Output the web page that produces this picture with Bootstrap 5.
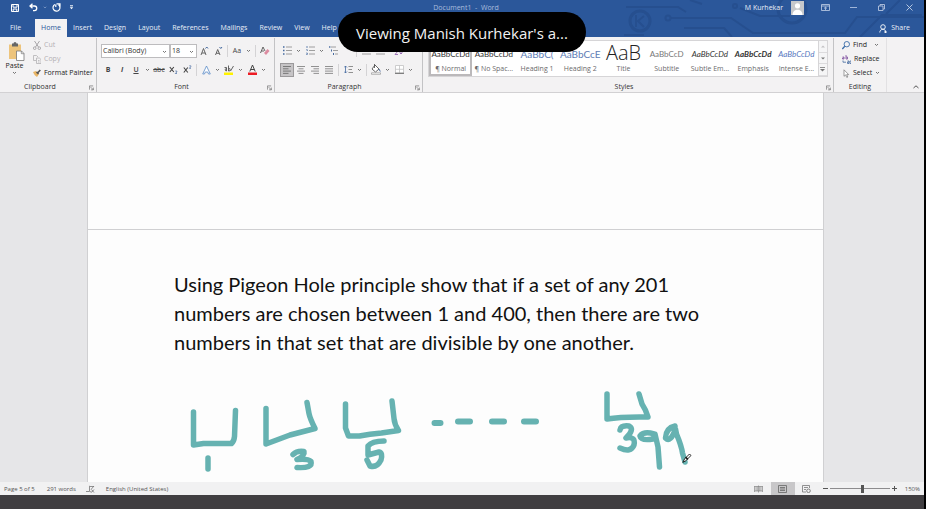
<!DOCTYPE html>
<html lang="en">
<head>
<meta charset="utf-8">
<meta name="viewport" content="width=device-width, initial-scale=1">
<title>Document1 - Word</title>
<link href="https://cdn.jsdelivr.net/npm/bootstrap@5.3.0/dist/css/bootstrap.min.css" rel="stylesheet">
<style>
:root{--blue:#2b579a;--ribbon:#f3f2f3;--line:#d2d1d3;--ink:#444446;--teal:#66b2b1}
body{font:7px/10px "Open Sans","Noto Sans",sans-serif;color:var(--ink);background:#000}
svg{display:block;flex:none}
button,select{font:inherit;color:inherit}
button{background:none;border:0;padding:0}
.app{min-height:100vh;margin-right:2px;background:#e6e6e8}
.head{background:var(--blue);color:#e9eef7}
.circuit{top:0;right:0}
.titlebar{height:19px;padding-bottom:4px}
.side{flex:1 1 0}
.win{margin-left:14px}
.doc-name{color:#a9bcdc}
.tabs a{height:18px;padding:0 6px;color:#e9eef7;text-decoration:none}
.tabs a:first-child{padding:0 14px 0 10px;min-width:35px}
.tabs a.active{background:var(--ribbon);color:var(--blue);width:32px}
.share{padding-right:14px}
.ribbon{height:56px;background:var(--ribbon);border-bottom:1px solid var(--line)}
.group{border-right:1px solid #c3c3c5;margin-top:1px}
.group-name{height:10px;color:#333}
.launch{right:2px;bottom:1px}
.g-clip{width:97px}.g-font{width:178px}.g-para{width:148px}.g-edit{width:53px;border-color:#e2e1e3}.g-end{width:37px}
.dim{color:#b3b1b4}
.dark{color:#222}
.stack button{height:14px;gap:3px}
.tools{padding:5px 0 0 4px}
.g-para .tools{padding-left:5px}
.tools .tool-row{height:15px;margin-bottom:4px}
.t{width:14px;height:14px;display:flex;align-items:center;justify-content:center;flex:none}
.c{width:9px;height:14px;display:flex;align-items:center;justify-content:center;flex:none}
.t.on{background:#c6c4c6;outline:1px solid #9b999b;outline-offset:-1px}
.rule{width:1px;height:12px;background:#d4d3d5;margin:0 2px}
.combo select{appearance:none;background:#fff;border:1px solid #bdbcbe;border-radius:0;height:14px;padding:0 2px 0 1px;width:100%;color:#333;line-height:11px}
.combo svg{right:3px;top:6px;pointer-events:none}
.fontname{width:69px}.fontsize{width:27px}
.gallery{margin:2px 5px 0;background:#fff;border:1px solid #d6d5d7;height:37px}
.style-item{flex:1 1 0;min-width:0;color:#6b6a6c;white-space:nowrap;padding-bottom:2px}
.style-item.on{outline:2px solid #bbb9bb;outline-offset:-2px}
.sample{font:8px/24px Lato,sans-serif;height:22px;color:#333}
.sample.s-head{font-size:10px;color:#5d7cb5}
.sample.s-title{font:20px/22px "Open Sans",sans-serif;font-weight:300;color:#222}
.sample.s-blue{color:#5778c0}.sample.s-gray{color:#777}
.scroller{width:9px;border-left:1px solid #d6d5d7;background:#f5f5f6}
.scroller button{flex:1 1 0;border-bottom:1px solid #dcdbdd}
.canvas{padding:0 100px 0 87px}
.sheet{background:#fdfdfd;border:1px solid #d0d0d2;border-top:0}
.sheet-prev{height:137px}
.sheet-next{border-bottom:0}
.question{font:20px/29px Lato,sans-serif;color:#111;padding:40px 86px 0;margin:0 0 1px}
.status{height:13px;background:#f1f1f2;color:#555;font-size:6px}
.status .view{width:24px;height:13px;display:flex;align-items:center;justify-content:center}
.status .view.on{background:#c8c7c9}
.zoomer{appearance:none;width:60px;height:9px;background:linear-gradient(#8d8c8e,#8d8c8e) center/100% 1px no-repeat;margin:0 2px}
.zoomer::-webkit-slider-thumb{appearance:none;width:3px;height:8px;background:#555;border:0}
.foot{height:14px;background:#403e41}
.pill{left:338px;top:12px;height:40px;border-radius:20px;background:#000;color:#f2f2f2;padding:0 18px;font-size:15px;line-height:42px;width:248px}
</style>
<script src="https://cdn.jsdelivr.net/npm/bootstrap@5.3.0/dist/js/bootstrap.bundle.min.js"></script>
</head>
<body>
<svg width="0" height="0" class="position-absolute" aria-hidden="true">
  <symbol id="car" viewBox="0 0 5 4"><path d="M1 1l1.500 1.500L4 1" fill="none" stroke="#666" stroke-width=".9"/></symbol>
  <symbol id="lau" viewBox="0 0 6 6"><path d="M.5 5V.5H5M2 2l3 3M5.200 2.500v2.700H2.500" fill="none" stroke="#666" stroke-width=".8"/></symbol>
</svg>
<div class="app d-flex flex-column position-relative">
  <header class="head position-relative">
    <svg class="circuit position-absolute" width="300" height="37" viewBox="624 0 300 37" fill="none" stroke="#264f8f" stroke-width="2" aria-hidden="true">
      <circle cx="640" cy="21" r="10" stroke-width="3"/><path d="M636 15v12M644 16l-6 5 6 6M626 7h52l8 5M624 35h20M671 18h60l22 15h92l12-16h67M684 28h40l8 9M740 8l20 8h30M860 37l22-22h40M900 0l-14 14M690 0l12 4"/>
      <circle cx="668" cy="18" r="2.500"/><circle cx="792" cy="9" r="14" stroke-width="3"/><circle cx="735" cy="6" r="2"/><circle cx="882" cy="6" r="2.500"/>
    </svg>
    <div class="titlebar d-flex align-items-center position-relative">
      <div class="side d-flex align-items-center ps-2">
        <button class="t" aria-label="Save"><svg width="8" height="8" viewBox="0 0 8 8"><path d="M.5.5h7v7h-7zM2 .5v2.700h4V.5M2.200 7.500V5h3.600v2.500" fill="none" stroke="#fff"/></svg></button>
        <button class="t ms-1" aria-label="Undo"><svg width="9" height="9" viewBox="0 0 9 9"><path d="M3.500.7L1 3l2.500 2.300M1 3h4.500c3 0 3 4.500 0 4.700H4" fill="none" stroke="#fff" stroke-width="1.300"/></svg></button>
        <button class="c" aria-label="Undo history"><svg width="4" height="3" viewBox="0 0 5 4"><path d="M1 1l1.500 1.500L4 1" fill="none" stroke="#9fb5d9"/></svg></button>
        <button class="t" aria-label="Repeat"><svg width="9" height="9" viewBox="0 0 9 9"><path d="M3 1.500A3.500 3.500 0 1 0 6.500 1.800M3.800 4V1.500M4.500.8H8v3" fill="none" stroke="#fff" stroke-width="1.200"/></svg></button>
        <button class="c ms-1" aria-label="Customize toolbar"><svg width="5" height="5" viewBox="0 0 5 5"><path d="M1 .8h3" stroke="#fff"/><path d="M.8 2.300h3.400L2.500 4.300z" fill="#fff"/></svg></button>
      </div>
      <div class="doc-name">Document1 &nbsp;-&nbsp; Word</div>
      <div class="side d-flex align-items-center justify-content-end">
        <span class="me-1 pe-1">M Kurhekar</span>
        <svg width="13" height="14" viewBox="0 0 13 14" role="img" aria-label="Profile"><path fill="#c6c8cb" d="M0 0h13v14H0z"/><circle cx="6.500" cy="4.800" r="2.600" fill="#fff"/><path d="M1.500 14c0-7 10-7 10 0z" fill="#fff"/></svg>
        <button class="t win" aria-label="Ribbon display options"><svg width="9" height="7" viewBox="0 0 9 7"><path d="M.5.5h8v6h-8zM.5 2h8M4.500 6V3.200M3 4.500l1.500-1.400L6 4.500" fill="none" stroke="#c5d2e8" stroke-width=".8"/></svg></button>
        <button class="t win" aria-label="Minimize"><svg width="7" height="7" viewBox="0 0 7 7"><path d="M0 3.500h7" stroke="#9fb5d9"/></svg></button>
        <button class="t win" aria-label="Restore"><svg width="7" height="7" viewBox="0 0 7 7"><path d="M.5 2h4.500v4.500H.5zM2 2V.5h4.500V5H5" fill="none" stroke="#b5c5e0" stroke-width=".9"/></svg></button>
        <button class="t win me-2" aria-label="Close"><svg width="7" height="7" viewBox="0 0 7 7"><path d="M.5.5l6 6M6.500.5l-6 6" stroke="#c5d2e8" stroke-width=".9"/></svg></button>
      </div>
    </div>
    <nav class="tabs d-flex position-relative">
      <a class="d-flex align-items-center" href="#">File</a><a class="d-flex align-items-center active" href="#" aria-current="page">Home</a><a class="d-flex align-items-center" href="#">Insert</a><a class="d-flex align-items-center" href="#">Design</a><a class="d-flex align-items-center" href="#">Layout</a><a class="d-flex align-items-center" href="#">References</a><a class="d-flex align-items-center" href="#">Mailings</a><a class="d-flex align-items-center" href="#">Review</a><a class="d-flex align-items-center" href="#">View</a><a class="d-flex align-items-center" href="#">Help</a>
      <button class="share ms-auto d-flex align-items-center gap-1"><svg width="8" height="9" viewBox="0 0 8 9"><circle cx="4" cy="3" r="2.300" fill="none" stroke="#fff" stroke-width=".9"/><path d="M.8 8.500c0-2 1.200-3 3-3.200 1.500 0 2.200.7 2.500 1.500M5 8h3M6.500 6.500v2.500" fill="none" stroke="#fff" stroke-width=".9"/></svg>Share</button>
    </nav>
  </header>

  <div class="ribbon d-flex">
    <section class="group g-clip position-relative d-flex flex-column">
      <div class="d-flex flex-fill">
        <button class="d-flex flex-column align-items-center ms-1 dark" aria-label="Paste">
          <svg class="ms-1 mt-1" width="17" height="19" viewBox="0 0 17 19"><path d="M1 2.500h12V17H1z" fill="#edc47c"/><path d="M4 1.500h1.500a1.500 1.500 0 0 1 3 0H10v3H4z" fill="#666"/><path d="M8.500 9h5l2.500 2.500v7H8.500z" fill="#fff" stroke="#777" stroke-width=".8"/><path d="M13.300 9v2.700H16" fill="none" stroke="#777" stroke-width=".7"/></svg>
          Paste
          <svg width="5" height="4"><use href="#car"/></svg>
        </button>
        <div class="stack d-flex flex-column ms-1 ps-1 align-items-start">
          <button class="d-flex align-items-center dim"><svg width="8" height="9" viewBox="0 0 8 9"><path d="M1.500 0l4 6M6.500 0l-4 6" stroke="#a9a7aa"/><circle cx="1.700" cy="7.200" r="1.300" fill="none" stroke="#a9a7aa"/><circle cx="6.300" cy="7.200" r="1.300" fill="none" stroke="#a9a7aa"/></svg>Cut</button>
          <button class="d-flex align-items-center dim"><svg width="8" height="9" viewBox="0 0 8 9"><path d="M3 5.500H.5v-5h3L5 2M3.500 3h2.800L8 4.500v4H3.500zM5 5.500h1.500M5 7h1.500" fill="none" stroke="#b3b1b4" stroke-width=".8"/></svg>Copy</button>
          <button class="d-flex align-items-center dark"><svg width="8" height="8" viewBox="0 0 8 8"><path d="M0 3l3-1 3 3-2 3C2 7 1 5 0 3z" fill="#e9b565"/><path d="M3.500 3l2 2M5 3.500L7.300 1" stroke="#555" stroke-width="1.600"/></svg><span>Format Painter</span></button>
        </div>
      </div>
      <div class="group-name text-center pe-3">Clipboard</div>
      <button class="launch position-absolute" aria-label="Clipboard options"><svg width="5" height="6"><use href="#lau"/></svg></button>
    </section>

    <section class="group g-font position-relative d-flex flex-column">
      <div class="tools flex-fill">
        <div class="tool-row d-flex align-items-center">
          <span class="combo fontname position-relative"><select aria-label="Font"><option>Calibri (Body)</option></select><svg class="position-absolute" width="5" height="4"><use href="#car"/></svg></span>
          <span class="combo fontsize position-relative"><select aria-label="Font size"><option>18</option></select><svg class="position-absolute" width="5" height="4"><use href="#car"/></svg></span>
          <button class="t" aria-label="Grow font"><svg width="9" height="10" viewBox="0 0 9 10"><path d="M1 9l2.500-6.500L6 9M2 7h3.200" fill="none" stroke="#555" stroke-width=".9"/><path d="M5.500 2.500L6.800 1 8 2.500" fill="none" stroke="#44699f"/></svg></button>
          <button class="t" aria-label="Shrink font"><svg width="9" height="10" viewBox="0 0 9 10"><path d="M1.500 9l2.200-5.500L6 9M2.300 7.300h2.900" fill="none" stroke="#555" stroke-width=".9"/><path d="M5.500 1L6.800 2.500 8 1" fill="none" stroke="#44699f"/></svg></button>
          <span class="rule"></span>
          <button class="t" aria-label="Change case">Aa</button><button class="c" aria-label="Case options"><svg width="5" height="4"><use href="#car"/></svg></button>
          <span class="rule"></span>
          <button class="t" aria-label="Clear formatting"><svg width="10" height="10" viewBox="0 0 10 10"><path d="M.5 7L3 1l2 4M1.500 5H4" fill="none" stroke="#555" stroke-width=".9"/><path d="M4 7l3.500-4L9.500 5 6 9z" fill="#dc8ba0"/></svg></button>
        </div>
        <div class="tool-row d-flex align-items-center">
          <button class="t fw-bold">B</button><button class="t fst-italic fw-bold">I</button><button class="t text-decoration-underline fw-semibold">U</button><button class="c" aria-label="Underline options"><svg width="5" height="4"><use href="#car"/></svg></button>
          <button class="t text-decoration-line-through">abc</button>
          <button class="t" aria-label="Subscript"><svg width="9" height="9" viewBox="0 0 9 9"><path d="M.8 2l4 5M4.800 2l-4 5" stroke="#444" stroke-width="1.100"/><path d="M6.300 6h1.500v1L6.300 8.500H8" fill="none" stroke="#44699f" stroke-width=".7"/></svg></button>
          <button class="t" aria-label="Superscript"><svg width="9" height="9" viewBox="0 0 9 9"><path d="M.8 2.500l4 5M4.800 2.500l-4 5" stroke="#444" stroke-width="1.100"/><path d="M6.300.8h1.500v1L6.300 3.300H8" fill="none" stroke="#44699f" stroke-width=".7"/></svg></button>
          <span class="rule"></span>
          <button class="t" aria-label="Text effects"><svg width="9" height="10" viewBox="0 0 9 10"><path d="M.7 9L4.500 1l3.800 8H6.500l-.8-2H3.300l-.8 2z" fill="#fff" stroke="#5a8bc8" stroke-width=".8"/></svg></button><button class="c" aria-label="Effects options"><svg width="5" height="4"><use href="#car"/></svg></button>
          <button class="t" aria-label="Highlight"><svg width="10" height="11" viewBox="0 0 10 11"><path d="M0 8.500h9v2.500H0z" fill="#fff200"/><path d="M2.500 4.500a1 1 0 1 0 0 2.500V3.500H.5M4.500 1.500V7a1.300 1.300 0 1 0 0-2.500M9.500 2L6.500 7" fill="none" stroke="#555" stroke-width=".9"/></svg></button><button class="c" aria-label="Highlight options"><svg width="5" height="4"><use href="#car"/></svg></button>
          <button class="t" aria-label="Font colour"><svg width="9" height="11" viewBox="0 0 9 11"><path d="M0 8.500h9v2.500H0z" fill="#ed1c24"/><path d="M1.800 7.500L4.500 1l2.700 6.500M2.800 5.500h3.400" fill="none" stroke="#444"/></svg></button><button class="c" aria-label="Colour options"><svg width="5" height="4"><use href="#car"/></svg></button>
        </div>
      </div>
      <div class="group-name text-center pe-2">Font</div>
      <button class="launch position-absolute" aria-label="Font options"><svg width="5" height="6"><use href="#lau"/></svg></button>
    </section>

    <section class="group g-para position-relative d-flex flex-column">
      <div class="tools flex-fill">
        <div class="tool-row d-flex align-items-center">
          <button class="t" aria-label="Bullets"><svg width="9" height="9" viewBox="0 0 9 9"><path d="M0 1h1.500M0 4.500h1.500M0 8h1.500" stroke="#44699f" stroke-width="1.400"/><path d="M3 1h6M3 4.500h6M3 8h6" stroke="#888" stroke-width=".8"/></svg></button><button class="c" aria-label="Bullet options"><svg width="5" height="4"><use href="#car"/></svg></button>
          <button class="t" aria-label="Numbering"><svg width="9" height="9" viewBox="0 0 9 9"><path d="M1 0v2M.3 3.700h1V5M.3 7h1v1.500H.3" stroke="#44699f" fill="none" stroke-width=".8"/><path d="M3 1h6M3 4.500h6M3 8h6" stroke="#888" stroke-width=".8"/></svg></button><button class="c" aria-label="Numbering options"><svg width="5" height="4"><use href="#car"/></svg></button>
          <button class="t" aria-label="Multilevel list"><svg width="9" height="9" viewBox="0 0 9 9"><path d="M.8 0v2M2.500 3.500v2M4.500 7v2" stroke="#44699f"/><path d="M2 1h5M4 4.500h5M6 8h3" stroke="#888" stroke-width=".8"/></svg></button>
          <span class="rule ms-3"></span>
          <button class="t" aria-label="Decrease indent"><svg width="9" height="9" viewBox="0 0 9 9"><path d="M0 1h9M4 4.500h5M0 8h9" stroke="#888" stroke-width=".8"/></svg></button>
          <button class="t" aria-label="Increase indent"><svg width="9" height="9" viewBox="0 0 9 9"><path d="M0 1h9M4 4.500h5M0 8h9" stroke="#888" stroke-width=".8"/></svg></button>
          <button class="t ms-1" aria-label="Sort"><svg width="9" height="9" viewBox="0 0 9 9"><path d="M1 5h3L1 8.500h3M7 1v7M5.500 6.500L7 8l1.500-1.500" fill="none" stroke="#8a5ba8" stroke-width=".8"/></svg></button>
        </div>
        <div class="tool-row d-flex align-items-center">
          <button class="t on" aria-label="Align left" aria-pressed="true"><svg width="8" height="8" viewBox="0 0 8 8"><path d="M0 .5h8M0 2.800h5.500M0 5.100h8M0 7.400h5.500" stroke="#666" stroke-width=".8"/></svg></button>
          <button class="t" aria-label="Center"><svg width="8" height="8" viewBox="0 0 8 8"><path d="M0 .5h8M1.500 2.800h5M0 5.100h8M1.500 7.400h5" stroke="#777" stroke-width=".8"/></svg></button>
          <button class="t" aria-label="Align right"><svg width="8" height="8" viewBox="0 0 8 8"><path d="M0 .5h8M2.500 2.800H8M0 5.100h8M2.500 7.400H8" stroke="#777" stroke-width=".8"/></svg></button>
          <button class="t" aria-label="Justify"><svg width="8" height="8" viewBox="0 0 8 8"><path d="M0 .5h8M0 2.800h8M0 5.100h8M0 7.400h8" stroke="#777" stroke-width=".8"/></svg></button>
          <span class="rule"></span>
          <button class="t" aria-label="Line spacing"><svg width="9" height="9" viewBox="0 0 9 9"><path d="M1.500 1v7M0 2.500L1.500 1 3 2.500M0 6.500L1.500 8 3 6.500" fill="none" stroke="#44699f" stroke-width=".8"/><path d="M4.500 1.500H9M4.500 4.500H8M4.500 7.500H9" stroke="#777" stroke-width=".8"/></svg></button><button class="c" aria-label="Spacing options"><svg width="5" height="4"><use href="#car"/></svg></button>
          <span class="rule"></span>
          <button class="t" aria-label="Shading"><svg width="10" height="11" viewBox="0 0 10 11"><path d="M4 1l4 4-3.500 3L1 5zM3.500 0v4" fill="#fff" stroke="#555" stroke-width=".9"/><path d="M8 5l1.300 2.500" stroke="#44699f"/><path d="M.5 8.800h9v1.500h-9z" fill="#fff" stroke="#888" stroke-width=".6"/></svg></button><button class="c" aria-label="Shading options"><svg width="5" height="4"><use href="#car"/></svg></button>
          <button class="t" aria-label="Borders"><svg width="9" height="9" viewBox="0 0 9 9"><path d="M.5.5h8v7.500h-8zM4.500.5v7.500M.5 4.300h8" fill="#fff" stroke="#c2c1c3" stroke-width=".8"/><path d="M0 8.300h9" stroke="#666"/></svg></button><button class="c" aria-label="Border options"><svg width="5" height="4"><use href="#car"/></svg></button>
        </div>
      </div>
      <div class="group-name text-center pe-2">Paragraph</div>
      <button class="launch position-absolute" aria-label="Paragraph options"><svg width="5" height="6"><use href="#lau"/></svg></button>
    </section>

    <section class="group flex-fill position-relative d-flex flex-column">
      <div class="flex-fill">
        <div class="gallery d-flex">
          <button class="style-item on"><span class="sample d-block">AaBbCcDd</span>¶ Normal</button>
          <button class="style-item"><span class="sample d-block">AaBbCcDd</span>¶ No Spac...</button>
          <button class="style-item"><span class="sample s-head d-block">AaBbC(</span>Heading 1</button>
          <button class="style-item"><span class="sample s-head d-block">AaBbCcE</span>Heading 2</button>
          <button class="style-item"><span class="sample s-title d-block">AaB</span>Title</button>
          <button class="style-item"><span class="sample s-gray d-block">AaBbCcD</span>Subtitle</button>
          <button class="style-item"><span class="sample fst-italic d-block">AaBbCcDd</span>Subtle Em...</button>
          <button class="style-item"><span class="sample fst-italic fw-bold d-block">AaBbCcDd</span>Emphasis</button>
          <button class="style-item"><span class="sample s-blue fst-italic d-block">AaBbCcDd</span>Intense E...</button>
          <div class="scroller d-flex flex-column">
            <button class="d-flex align-items-center justify-content-center" aria-label="Previous styles"><svg width="4" height="3" viewBox="0 0 4 3"><path d="M0 2.500L2 .5l2 2z" fill="#c2c1c3"/></svg></button>
            <button class="d-flex align-items-center justify-content-center" aria-label="Next styles"><svg width="4" height="3" viewBox="0 0 4 3"><path d="M0 .5h4l-2 2z" fill="#777"/></svg></button>
            <button class="d-flex align-items-center justify-content-center" aria-label="More styles"><svg width="5" height="5" viewBox="0 0 5 5"><path d="M0 .5h5" stroke="#777" stroke-width=".8"/><path d="M0 2h5L2.500 4.500z" fill="#777"/></svg></button>
          </div>
        </div>
      </div>
      <div class="group-name text-center pe-2">Styles</div>
      <button class="launch position-absolute" aria-label="Styles options"><svg width="5" height="6"><use href="#lau"/></svg></button>
    </section>

    <section class="group g-edit d-flex flex-column">
      <div class="stack flex-fill ps-2 d-flex flex-column align-items-start dark">
        <button class="d-flex align-items-center"><svg width="8" height="9" viewBox="0 0 8 9"><circle cx="4.800" cy="3.200" r="2.700" fill="none" stroke="#3a6ca8" stroke-width=".9"/><path d="M2.800 5.200L.3 8" stroke="#3a6ca8" stroke-width="1.300"/></svg>Find <svg class="ms-1" width="5" height="4"><use href="#car"/></svg></button>
        <button class="d-flex align-items-center"><svg width="9" height="9" viewBox="0 0 9 9"><path d="M.5 2h1.500v2H.5V3H2M4 0v4h1.500V2H4" fill="none" stroke="#7d4f9e" stroke-width=".8"/><path d="M5.500 6H7v2.500H5.500V7H7M9 6H8v2.500h1M1 5.500v1.700h3" fill="none" stroke="#44699f" stroke-width=".8"/></svg>Replace</button>
        <button class="d-flex align-items-center"><svg width="8" height="9" viewBox="0 0 8 9"><path d="M2 .8v6.500l1.600-1.400 1.200 2.600 1-.5-1.100-2.400h2z" fill="#fff" stroke="#777" stroke-width=".7"/></svg>Select<svg width="5" height="4"><use href="#car"/></svg></button>
      </div>
      <div class="group-name text-center">Editing</div>
    </section>
    <div class="g-end d-flex align-items-end justify-content-end">
      <button class="c me-1" aria-label="Collapse ribbon"><svg class="mt-1" width="6" height="4" viewBox="0 0 6 4"><path d="M.5 3L3 .8 5.500 3" fill="none" stroke="#555"/></svg></button>
    </div>
  </div>

  <main class="canvas flex-fill d-flex flex-column">
    <div class="sheet sheet-prev"></div>
    <article class="sheet sheet-next flex-fill">
      <p class="question">Using Pigeon Hole principle show that if a set of any 201 numbers are chosen between 1 and 400, then there are two numbers in that set that are divisible by one another.</p>
      <svg class="w-100" viewBox="88 358 735 124" preserveAspectRatio="xMinYMin meet" height="124" fill="none" stroke="#66b2b1" stroke-width="5.500" stroke-linecap="round" stroke-linejoin="round" role="img" aria-label="Boxes labelled 1, 3, 5 up to 399">
        <path d="M193.500 412v33l10-1.500h28q2.500-2 3-7l1-26"/>
        <path d="M208 458v11"/>
        <path d="M266 408.500v35.500l24-9 25-6.500q-5-10-6-15l-2-11"/>
        <path d="M293 454.500q4-4 11-3 1 4-7 8 11-1 14 2 2 7-14 6"/>
        <path d="M345.500 404v24l3 8h11q10-2 22-3l17-2.500q-4-6-4.500-12l-2-17.500"/>
        <path d="M384 441q-12 0-16 5l0 9 11-3q4 1 2 8-4 8-11 6l-3-6"/>
        <path d="M434.500 423h6M458 421.500h12M492 421.500h12M524 421.500h12" stroke-width="6"/>
        <path d="M607 394v25q14-2.500 41-2-2-7-6-13l-3-10"/>
        <path d="M620 430q1-5 9-4 6 3-3 12 10-2 8 7-3 8-14 3"/>
        <path d="M654 434q-10-3-14 2 1 5 13 3l2-5 3 13 1.500 20"/>
        <path d="M675 426q-9 2-9.500 12 5 5 10-9l1 5q5 12 6 19l2.500 9"/>
        <path d="M683 462l1.500-3 5-5 1.500 1.500-5 5z" fill="#fff" stroke="#111" stroke-width=".9"/>
        <path d="M686 457.500l1.500 1.500" stroke="#111" stroke-width="1.500"/>
      </svg>
    </article>
  </main>

  <footer>
    <div class="status d-flex align-items-center">
      <span class="ps-1">Page 5 of 5</span><span class="ms-2 ps-1">291 words</span>
      <button class="t ms-2" aria-label="Proofing"><svg width="9" height="8" viewBox="0 0 9 8"><path d="M0 6.500h3.500V.8M4 1.500h4M4 6.800h1.500M8 1L5 4.500M5.500 4.500l2.500 3M8 4.500l-2.500 3" fill="none" stroke="#777" stroke-width=".8"/></svg></button>
      <span class="ms-2">English (United States)</span>
      <button class="view ms-auto" aria-label="Read mode"><svg width="9" height="8" viewBox="0 0 9 8"><path d="M.5 1v6M2 1.500v4.500M3.300 1.500v4.500M4.500.5v7M5.700 1.500v4.500M7 1.500v4.500M8.500 1v6M.5 1.500h8M.5 6h8" stroke="#777" stroke-width=".6"/></svg></button>
      <button class="view on" aria-label="Print layout" aria-pressed="true"><svg width="9" height="8" viewBox="0 0 9 8"><path d="M.5.5h8v7h-8zM2 2.500h5M2 4h5M2 5.500h5" fill="none" stroke="#666" stroke-width=".8"/></svg></button>
      <button class="view" aria-label="Web layout"><svg width="9" height="8" viewBox="0 0 9 8"><path d="M4 7H.5V.5h7V3M2 2.500h4M2 4.500h2" fill="none" stroke="#777" stroke-width=".8"/><circle cx="6.500" cy="5.800" r="1.800" fill="none" stroke="#666" stroke-width=".8"/></svg></button>
      <button aria-label="Zoom out" class="ms-1"><svg width="5" height="5" viewBox="0 0 5 5"><path d="M0 2.500h5" stroke="#555"/></svg></button>
      <input class="zoomer" type="range" min="0" max="100" value="55" aria-label="Zoom">
      <button aria-label="Zoom in"><svg width="5" height="5" viewBox="0 0 5 5"><path d="M0 2.500h5M2.500 0v5" stroke="#555"/></svg></button>
      <span class="ms-2 me-1">150%</span>
    </div>
    <div class="foot"></div>
  </footer>
  <div class="pill position-absolute text-nowrap">Viewing Manish Kurhekar's a...</div>
</div>
</body>
</html>
